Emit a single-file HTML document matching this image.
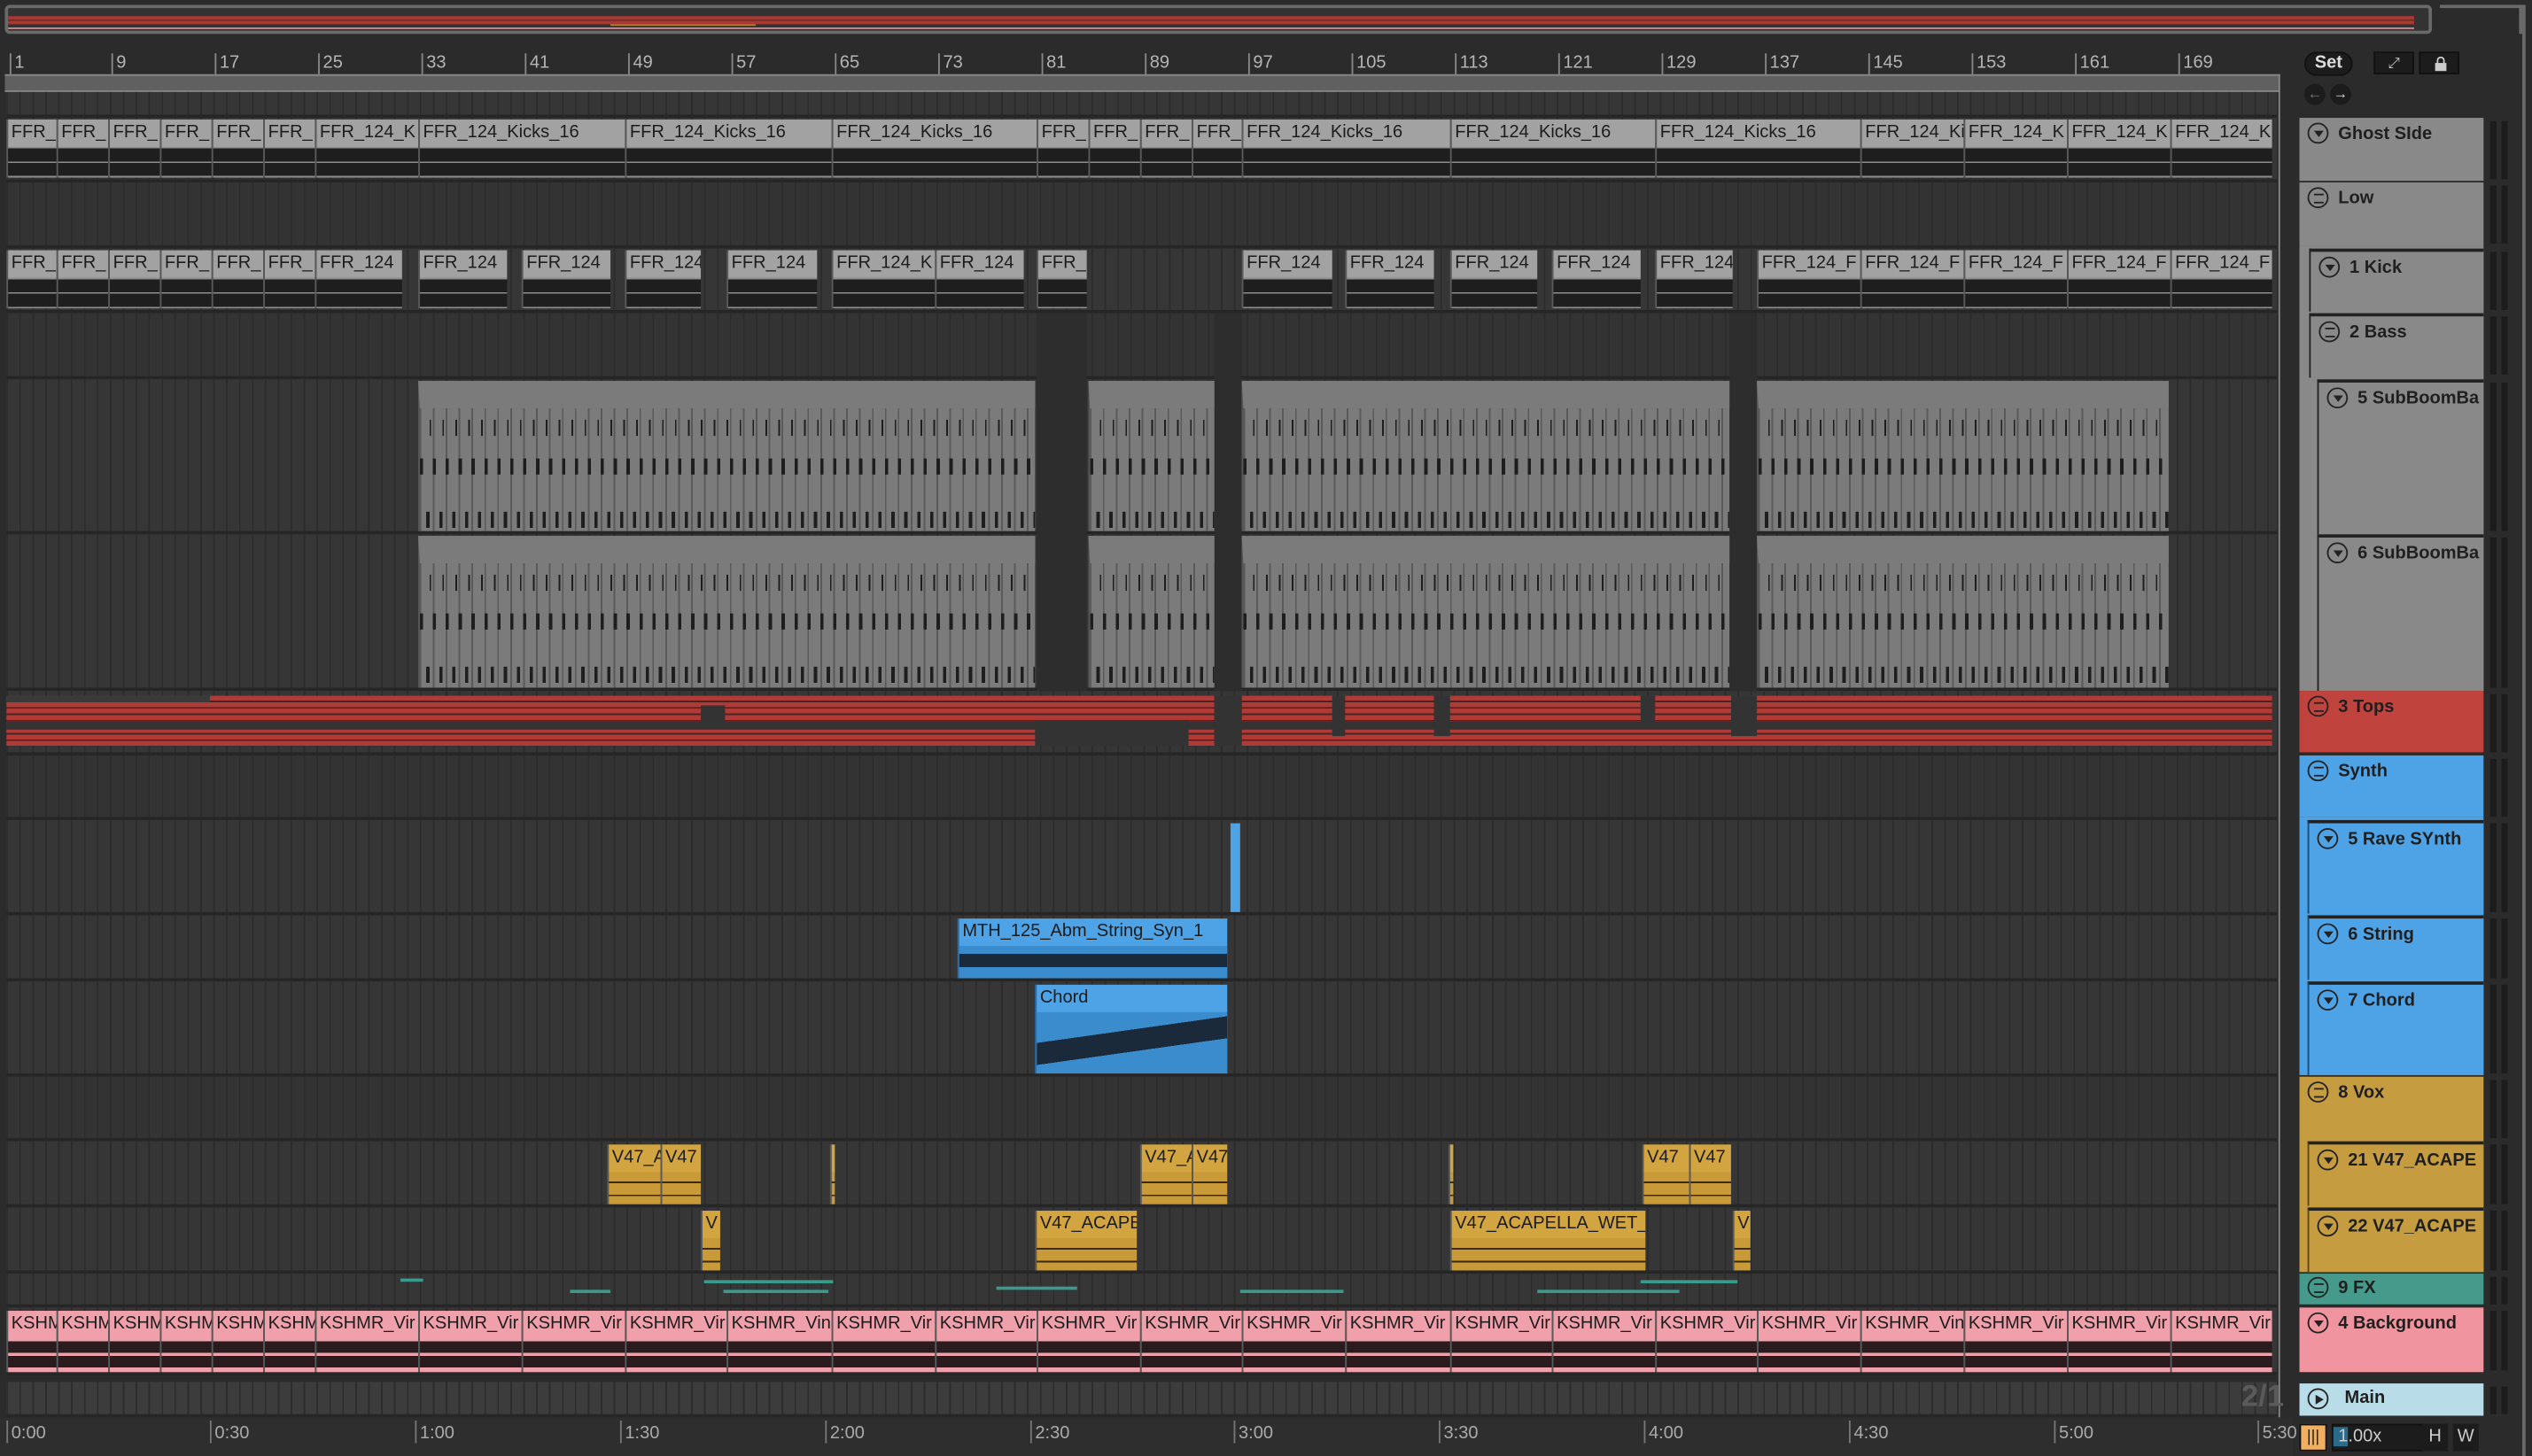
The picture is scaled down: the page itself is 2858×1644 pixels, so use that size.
<!DOCTYPE html>
<html><head><meta charset="utf-8"><style>
*{margin:0;padding:0;box-sizing:border-box}
body{width:2858px;height:1644px;background:#2b2b2b;overflow:hidden;font-family:"Liberation Sans",sans-serif}
#w{position:absolute;left:0;top:0;width:1568px;height:902px;transform:scale(1.8227);transform-origin:0 0;background:#2b2b2b}
.a{position:absolute}
.grid{background-color:#363636;background-image:repeating-linear-gradient(to right,#2c2c2c 0 1px,transparent 1px 8px)}
.row{position:absolute;left:4px;width:1406px;border-bottom:2px solid #262626}
.c{position:absolute;overflow:hidden;border-left:1px solid #5a5a5a;font-size:11px;color:#1c1c1c;white-space:nowrap}
.c .h{height:17px;line-height:17px;padding-left:2px}
.b{display:none}
.g{background:linear-gradient(to bottom,#a2a2a2 0 17px,#8d8d8d 17px 18px,#1e1e1e 18px 26px,#8d8d8d 26px 27px,#1e1e1e 27px 35px,#8d8d8d 35px)}
.p{background:linear-gradient(to bottom,#f0a0aa 0 19px,#2a1c1e 19px 26px,#f0a0aa 26px 28px,#2a1c1e 28px 35px,#f0a0aa 35px)}
.y{background:linear-gradient(to bottom,#d2a540 0 17px,#c89a38 17px 23px,#3a2a10 23px 24px,#c89a38 24px 31px,#3a2a10 31px 32px,#c89a38 32px)}
.bl{background:#4ea3e6}
.m{background:#7b7b7b;border-top:17px solid #7b7b7b;border-left:1px solid #555}
.m .n{position:absolute;left:0;right:0}
.n1{top:7px;height:10px;background:repeating-linear-gradient(to right,transparent 0 6px,#1e1e1e 6px 7px,transparent 7px 8px)}
.n2{top:31px;height:10px;background:repeating-linear-gradient(to right,#1e1e1e 0 2px,transparent 2px 8px,#1e1e1e 8px 10px,transparent 10px 16px)}
.n3{top:64px;height:10px;background:repeating-linear-gradient(to right,transparent 0 4px,#1e1e1e 4px 6px,transparent 6px 12px,#1e1e1e 12px 14px,transparent 14px 16px)}
.m .v{position:absolute;top:-17px;bottom:0;left:0;right:0;background:repeating-linear-gradient(to right,#5a5a5a 0 1px,transparent 1px 8px)}
.hd{position:absolute;left:1424px;width:114px;font-size:11px;font-weight:bold;color:#1f1f1f;padding-left:24px;padding-top:4px;white-space:nowrap;overflow:hidden}
.hd i{position:absolute;left:5px;top:3px;width:13px;height:13px;border:1.3px solid #222;border-radius:50%}
.hd i:after{content:"";position:absolute;left:2.5px;top:4px;border-left:3.5px solid transparent;border-right:3.5px solid transparent;border-top:4px solid #222}
.hd i.l:after{left:3px;top:3px;width:6px;height:4px;border:none;border-top:1px solid #222;border-bottom:1px solid #222}
.hd i.pl:after{left:4px;top:2.5px;border-top:3.5px solid transparent;border-bottom:3.5px solid transparent;border-left:5px solid #222;border-right:none}
.mt{position:absolute;left:1542px;width:12px;background:linear-gradient(to right,#1c1c1c 0 4px,transparent 4px 7px,#1c1c1c 7px 11px,transparent 11px)}
.rn{position:absolute;top:33px;font-size:11px;color:#b5b5b5;border-left:1px solid #888;padding-left:2px;height:14px;line-height:12px}
.tn{position:absolute;top:880px;font-size:11px;color:#aaa;border-left:1px solid #777;padding-left:2px;height:14px;line-height:16px}
</style></head><body><div id="w">
<!-- overview -->
<div class="a" style="left:3px;top:3px;width:1503px;height:18px;border:2px solid #6a6a6a;border-radius:3px;background:#333"></div>
<div class="a" style="left:5px;top:10px;width:1490px;height:5px;background:#a83a34"></div>
<div class="a" style="left:5px;top:12px;width:1490px;height:1px;background:#7a2a26"></div>
<div class="a" style="left:5px;top:17px;width:1490px;height:1px;background:#d88a92"></div>
<div class="a" style="left:378px;top:15px;width:90px;height:1px;background:#b08030"></div>
<div class="a" style="left:1511px;top:3px;width:51px;height:18px;border:2px solid #6a6a6a;border-left:none;border-bottom:none"></div>
<div class="a" style="left:1562px;top:3px;width:2px;height:899px;background:#6a6a6a"></div>
<!-- ruler -->
<div class="rn" style="left:6px">1</div><div class="rn" style="left:69px">9</div><div class="rn" style="left:133px">17</div><div class="rn" style="left:197px">25</div><div class="rn" style="left:261px">33</div><div class="rn" style="left:325px">41</div><div class="rn" style="left:389px">49</div><div class="rn" style="left:453px">57</div><div class="rn" style="left:517px">65</div><div class="rn" style="left:581px">73</div><div class="rn" style="left:645px">81</div><div class="rn" style="left:709px">89</div><div class="rn" style="left:773px">97</div><div class="rn" style="left:837px">105</div><div class="rn" style="left:901px">113</div><div class="rn" style="left:965px">121</div><div class="rn" style="left:1029px">129</div><div class="rn" style="left:1093px">137</div><div class="rn" style="left:1157px">145</div><div class="rn" style="left:1221px">153</div><div class="rn" style="left:1285px">161</div><div class="rn" style="left:1349px">169</div>
<div class="a" style="left:3px;top:46px;width:1409px;height:11px;background:#606060;border-top:1px solid #888;border-bottom:1px solid #888"></div>
<div class="a" style="left:1411px;top:46px;width:1px;height:832px;background:#888"></div>
<!-- rows -->
<div class="row grid" style="top:57px;height:16px"></div>
<div class="row grid" style="top:73px;height:40px"></div>
<div class="row grid" style="top:113px;height:41px;background-color:#333"></div>
<div class="row grid" style="top:154px;height:40px"></div>
<div class="row grid" style="top:194px;height:41px;background-color:#333"></div>
<div class="row grid" style="top:235px;height:96px"></div>
<div class="row grid" style="top:331px;height:97px"></div>
<div class="row grid" style="top:428px;height:40px"></div>
<div class="row grid" style="top:468px;height:40px;background-color:#333"></div>
<div class="row grid" style="top:508px;height:59px"></div>
<div class="row grid" style="top:567px;height:41px"></div>
<div class="row grid" style="top:608px;height:59px"></div>
<div class="row grid" style="top:667px;height:40px;background-color:#333"></div>
<div class="row grid" style="top:707px;height:41px"></div>
<div class="row grid" style="top:748px;height:41px"></div>
<div class="row grid" style="top:789px;height:21px"></div>
<div class="row grid" style="top:810px;height:42px"></div>
<div class="row grid" style="top:856px;height:22px;background-color:#3c3c3c"></div>
<div class="a" style="left:4px;top:852px;width:1406px;height:4px;background:#2a2a2a"></div>
<!-- Ghost side clips -->
<div class="c g" style="left:4px;top:74px;width:31px;height:36px"><div class="h">FFR_</div></div>
<div class="c g" style="left:35px;top:74px;width:32px;height:36px"><div class="h">FFR_</div></div>
<div class="c g" style="left:67px;top:74px;width:32px;height:36px"><div class="h">FFR_</div></div>
<div class="c g" style="left:99px;top:74px;width:32px;height:36px"><div class="h">FFR_</div></div>
<div class="c g" style="left:131px;top:74px;width:32px;height:36px"><div class="h">FFR_</div></div>
<div class="c g" style="left:163px;top:74px;width:32px;height:36px"><div class="h">FFR_</div></div>
<div class="c g" style="left:195px;top:74px;width:64px;height:36px"><div class="h">FFR_124_K</div></div>
<div class="c g" style="left:259px;top:74px;width:128px;height:36px"><div class="h">FFR_124_Kicks_16</div></div>
<div class="c g" style="left:387px;top:74px;width:128px;height:36px"><div class="h">FFR_124_Kicks_16</div></div>
<div class="c g" style="left:515px;top:74px;width:127px;height:36px"><div class="h">FFR_124_Kicks_16</div></div>
<div class="c g" style="left:642px;top:74px;width:32px;height:36px"><div class="h">FFR_</div></div>
<div class="c g" style="left:674px;top:74px;width:32px;height:36px"><div class="h">FFR_</div></div>
<div class="c g" style="left:706px;top:74px;width:32px;height:36px"><div class="h">FFR_</div></div>
<div class="c g" style="left:738px;top:74px;width:31px;height:36px"><div class="h">FFR_</div></div>
<div class="c g" style="left:769px;top:74px;width:129px;height:36px"><div class="h">FFR_124_Kicks_16</div></div>
<div class="c g" style="left:898px;top:74px;width:127px;height:36px"><div class="h">FFR_124_Kicks_16</div></div>
<div class="c g" style="left:1025px;top:74px;width:127px;height:36px"><div class="h">FFR_124_Kicks_16</div></div>
<div class="c g" style="left:1152px;top:74px;width:64px;height:36px"><div class="h">FFR_124_Ki</div></div>
<div class="c g" style="left:1216px;top:74px;width:64px;height:36px"><div class="h">FFR_124_K</div></div>
<div class="c g" style="left:1280px;top:74px;width:64px;height:36px"><div class="h">FFR_124_K</div></div>
<div class="c g" style="left:1344px;top:74px;width:63px;height:36px"><div class="h">FFR_124_K</div></div>
<!-- Kick clips -->
<div class="c g" style="left:4px;top:155px;width:31px;height:36px"><div class="h">FFR_</div></div>
<div class="c g" style="left:35px;top:155px;width:32px;height:36px"><div class="h">FFR_</div></div>
<div class="c g" style="left:67px;top:155px;width:32px;height:36px"><div class="h">FFR_</div></div>
<div class="c g" style="left:99px;top:155px;width:32px;height:36px"><div class="h">FFR_</div></div>
<div class="c g" style="left:131px;top:155px;width:32px;height:36px"><div class="h">FFR_</div></div>
<div class="c g" style="left:163px;top:155px;width:32px;height:36px"><div class="h">FFR_</div></div>
<div class="c g" style="left:195px;top:155px;width:54px;height:36px"><div class="h">FFR_124</div></div>
<div class="c g" style="left:259px;top:155px;width:55px;height:36px"><div class="h">FFR_124</div></div>
<div class="c g" style="left:323px;top:155px;width:55px;height:36px"><div class="h">FFR_124</div></div>
<div class="c g" style="left:387px;top:155px;width:47px;height:36px"><div class="h">FFR_124</div></div>
<div class="c g" style="left:450px;top:155px;width:56px;height:36px"><div class="h">FFR_124</div></div>
<div class="c g" style="left:515px;top:155px;width:64px;height:36px"><div class="h">FFR_124_K</div></div>
<div class="c g" style="left:579px;top:155px;width:55px;height:36px"><div class="h">FFR_124</div></div>
<div class="c g" style="left:642px;top:155px;width:31px;height:36px"><div class="h">FFR_</div></div>
<div class="c g" style="left:769px;top:155px;width:56px;height:36px"><div class="h">FFR_124</div></div>
<div class="c g" style="left:833px;top:155px;width:55px;height:36px"><div class="h">FFR_124</div></div>
<div class="c g" style="left:898px;top:155px;width:54px;height:36px"><div class="h">FFR_124</div></div>
<div class="c g" style="left:961px;top:155px;width:55px;height:36px"><div class="h">FFR_124</div></div>
<div class="c g" style="left:1025px;top:155px;width:48px;height:36px"><div class="h">FFR_124</div></div>
<div class="c g" style="left:1088px;top:155px;width:64px;height:36px"><div class="h">FFR_124_F</div></div>
<div class="c g" style="left:1152px;top:155px;width:64px;height:36px"><div class="h">FFR_124_F</div></div>
<div class="c g" style="left:1216px;top:155px;width:64px;height:36px"><div class="h">FFR_124_F</div></div>
<div class="c g" style="left:1280px;top:155px;width:64px;height:36px"><div class="h">FFR_124_F</div></div>
<div class="c g" style="left:1344px;top:155px;width:63px;height:36px"><div class="h">FFR_124_F</div></div>
<!-- gaps in dark -->
<div class="a" style="left:642px;top:194px;width:31px;height:234px;background:#2d2d2d"></div>
<div class="a" style="left:752px;top:194px;width:17px;height:234px;background:#2d2d2d"></div>
<div class="a" style="left:1071px;top:194px;width:17px;height:234px;background:#2d2d2d"></div>
<!-- SubBoomBa midi -->
<div class="c m" style="left:259px;top:236px;width:382px;height:93px"><div class="v"></div><div class="n n1"></div><div class="n n2"></div><div class="n n3"></div></div>
<div class="c m" style="left:674px;top:236px;width:78px;height:93px"><div class="v"></div><div class="n n1"></div><div class="n n2"></div><div class="n n3"></div></div>
<div class="c m" style="left:769px;top:236px;width:302px;height:93px"><div class="v"></div><div class="n n1"></div><div class="n n2"></div><div class="n n3"></div></div>
<div class="c m" style="left:1088px;top:236px;width:255px;height:93px"><div class="v"></div><div class="n n1"></div><div class="n n2"></div><div class="n n3"></div></div>
<div class="c m" style="left:259px;top:332px;width:382px;height:94px"><div class="v"></div><div class="n n1"></div><div class="n n2"></div><div class="n n3"></div></div>
<div class="c m" style="left:674px;top:332px;width:78px;height:94px"><div class="v"></div><div class="n n1"></div><div class="n n2"></div><div class="n n3"></div></div>
<div class="c m" style="left:769px;top:332px;width:302px;height:94px"><div class="v"></div><div class="n n1"></div><div class="n n2"></div><div class="n n3"></div></div>
<div class="c m" style="left:1088px;top:332px;width:255px;height:94px"><div class="v"></div><div class="n n1"></div><div class="n n2"></div><div class="n n3"></div></div>
<!-- Tops -->
<div class="a" style="left:4px;top:431px;width:748px;height:31px;background:repeating-linear-gradient(to bottom,#b03a36 0 3px,#4a2422 3px 4px)"></div>
<div class="a" style="left:769px;top:431px;width:638px;height:31px;background:repeating-linear-gradient(to bottom,#b03a36 0 3px,#4a2422 3px 4px)"></div>
<div class="a" style="left:4px;top:447px;width:1403px;height:5px;background:#333"></div>
<div class="a" style="left:752px;top:431px;width:17px;height:31px;background:#333"></div>
<div class="a" style="left:4px;top:431px;width:126px;height:4px;background:#3a3a3a"></div>
<div class="a" style="left:434px;top:437px;width:15px;height:12px;background:#333"></div>
<div class="a" style="left:641px;top:446px;width:95px;height:16px;background:#333"></div>
<div class="a" style="left:825px;top:431px;width:8px;height:25px;background:#333"></div>
<div class="a" style="left:888px;top:431px;width:10px;height:25px;background:#333"></div>
<div class="a" style="left:1016px;top:431px;width:9px;height:20px;background:#333"></div>
<div class="a" style="left:1072px;top:431px;width:16px;height:25px;background:#333"></div>
<!-- Synth clips -->
<div class="a bl" style="left:762px;top:510px;width:6px;height:55px"></div>
<div class="c bl" style="left:593px;top:569px;width:167px;height:37px;border-left:1px solid #2a6aa0"><div class="h">MTH_125_Abm_String_Syn_1</div><div style="height:20px;background:linear-gradient(to bottom,#3a8ccc 0 5px,#1a2a3a 5px 13px,#3a8ccc 13px)"></div></div>
<div class="c bl" style="left:641px;top:610px;width:119px;height:55px;border-left:1px solid #2a6aa0"><div class="h">Chord</div><div style="height:38px;background:linear-gradient(172deg,#3a8ccc 0 35%,#1a2a3a 35% 60%,#3a8ccc 60%)"></div></div>
<!-- Vox -->
<div class="c y" style="left:376px;top:709px;width:33px;height:37px"><div class="h">V47_A</div></div>
<div class="c y" style="left:409px;top:709px;width:25px;height:37px"><div class="h">V47</div></div>
<div class="c y" style="left:514px;top:709px;width:3px;height:37px"></div>
<div class="c y" style="left:706px;top:709px;width:32px;height:37px"><div class="h">V47_A</div></div>
<div class="c y" style="left:738px;top:709px;width:22px;height:37px"><div class="h">V47</div></div>
<div class="c y" style="left:897px;top:709px;width:3px;height:37px"></div>
<div class="c y" style="left:1017px;top:709px;width:29px;height:37px"><div class="h">V47</div></div>
<div class="c y" style="left:1046px;top:709px;width:26px;height:37px"><div class="h">V47</div></div>
<div class="c y" style="left:434px;top:750px;width:12px;height:37px"><div class="h">V</div></div>
<div class="c y" style="left:641px;top:750px;width:63px;height:37px"><div class="h">V47_ACAPE</div></div>
<div class="c y" style="left:898px;top:750px;width:121px;height:37px"><div class="h">V47_ACAPELLA_WET_</div></div>
<div class="c y" style="left:1073px;top:750px;width:11px;height:37px"><div class="h">V</div></div>
<!-- FX dashes -->
<div class="a" style="left:248px;top:792px;width:14px;height:2px;background:#3a9a8c"></div>
<div class="a" style="left:353px;top:799px;width:25px;height:2px;background:#3a9a8c"></div>
<div class="a" style="left:436px;top:793px;width:80px;height:2px;background:#3a9a8c"></div>
<div class="a" style="left:448px;top:799px;width:65px;height:2px;background:#3a9a8c"></div>
<div class="a" style="left:617px;top:797px;width:50px;height:2px;background:#3a9a8c"></div>
<div class="a" style="left:768px;top:799px;width:64px;height:2px;background:#3a9a8c"></div>
<div class="a" style="left:952px;top:799px;width:88px;height:2px;background:#3a9a8c"></div>
<div class="a" style="left:1016px;top:793px;width:60px;height:2px;background:#3a9a8c"></div>
<!-- Background pink -->
<div class="c p" style="left:4px;top:812px;width:31px;height:38px"><div class="h">KSHM</div></div>
<div class="c p" style="left:35px;top:812px;width:32px;height:38px"><div class="h">KSHM</div></div>
<div class="c p" style="left:67px;top:812px;width:32px;height:38px"><div class="h">KSHM</div></div>
<div class="c p" style="left:99px;top:812px;width:32px;height:38px"><div class="h">KSHM</div></div>
<div class="c p" style="left:131px;top:812px;width:32px;height:38px"><div class="h">KSHM</div></div>
<div class="c p" style="left:163px;top:812px;width:32px;height:38px"><div class="h">KSHM</div></div>
<div class="c p" style="left:195px;top:812px;width:64px;height:38px"><div class="h">KSHMR_Vir</div></div>
<div class="c p" style="left:259px;top:812px;width:64px;height:38px"><div class="h">KSHMR_Vir</div></div>
<div class="c p" style="left:323px;top:812px;width:64px;height:38px"><div class="h">KSHMR_Vir</div></div>
<div class="c p" style="left:387px;top:812px;width:63px;height:38px"><div class="h">KSHMR_Vir</div></div>
<div class="c p" style="left:450px;top:812px;width:65px;height:38px"><div class="h">KSHMR_Vin</div></div>
<div class="c p" style="left:515px;top:812px;width:64px;height:38px"><div class="h">KSHMR_Vir</div></div>
<div class="c p" style="left:579px;top:812px;width:63px;height:38px"><div class="h">KSHMR_Vir</div></div>
<div class="c p" style="left:642px;top:812px;width:64px;height:38px"><div class="h">KSHMR_Vir</div></div>
<div class="c p" style="left:706px;top:812px;width:63px;height:38px"><div class="h">KSHMR_Vir</div></div>
<div class="c p" style="left:769px;top:812px;width:64px;height:38px"><div class="h">KSHMR_Vir</div></div>
<div class="c p" style="left:833px;top:812px;width:65px;height:38px"><div class="h">KSHMR_Vir</div></div>
<div class="c p" style="left:898px;top:812px;width:63px;height:38px"><div class="h">KSHMR_Vir</div></div>
<div class="c p" style="left:961px;top:812px;width:64px;height:38px"><div class="h">KSHMR_Vir</div></div>
<div class="c p" style="left:1025px;top:812px;width:63px;height:38px"><div class="h">KSHMR_Vir</div></div>
<div class="c p" style="left:1088px;top:812px;width:64px;height:38px"><div class="h">KSHMR_Vir</div></div>
<div class="c p" style="left:1152px;top:812px;width:64px;height:38px"><div class="h">KSHMR_Vin</div></div>
<div class="c p" style="left:1216px;top:812px;width:64px;height:38px"><div class="h">KSHMR_Vir</div></div>
<div class="c p" style="left:1280px;top:812px;width:64px;height:38px"><div class="h">KSHMR_Vir</div></div>
<div class="c p" style="left:1344px;top:812px;width:63px;height:38px"><div class="h">KSHMR_Vir</div></div>
<div class="a" style="left:1388px;top:855px;font-size:19px;font-weight:bold;color:#5a5a5a">2/1</div>
<!-- bottom times -->
<div class="a" style="left:0;top:878px;width:1420px;height:24px;background:#2e2e2e"></div>
<div class="tn" style="left:4px">0:00</div><div class="tn" style="left:130px">0:30</div><div class="tn" style="left:257px">1:00</div><div class="tn" style="left:384px">1:30</div><div class="tn" style="left:511px">2:00</div><div class="tn" style="left:638px">2:30</div><div class="tn" style="left:764px">3:00</div><div class="tn" style="left:891px">3:30</div><div class="tn" style="left:1018px">4:00</div><div class="tn" style="left:1145px">4:30</div><div class="tn" style="left:1272px">5:00</div><div class="tn" style="left:1398px">5:30</div>
<!-- right controls -->
<div class="a" style="left:1427px;top:32px;width:30px;height:15px;border-radius:8px;background:#1c1c1c;border:1px solid #111;color:#ddd;font-size:11px;font-weight:bold;text-align:center;line-height:13px">Set</div>
<div class="a" style="left:1470px;top:32px;width:25px;height:14px;background:#1c1c1c;border:1px solid #111;color:#ccc;font-size:9px;text-align:center;line-height:12px">⤢</div>
<div class="a" style="left:1498px;top:32px;width:25px;height:14px;background:#1c1c1c;border:1px solid #111"><div class="a" style="left:9px;top:6px;width:7px;height:5px;background:#ccc"></div><div class="a" style="left:10px;top:2px;width:5px;height:6px;border:1.5px solid #ccc;border-bottom:none;border-radius:3px 3px 0 0"></div></div>
<div class="a" style="left:1427px;top:52px;width:13px;height:13px;border-radius:50%;background:#1c1c1c;color:#777;font-size:9px;text-align:center;line-height:13px">←</div>
<div class="a" style="left:1443px;top:52px;width:13px;height:13px;border-radius:50%;background:#1c1c1c;color:#ddd;font-size:9px;text-align:center;line-height:13px">→</div>
<!-- headers -->
<div class="hd" style="top:73px;height:39px;background:#898989"><i></i>Ghost SIde</div>
<div class="hd" style="top:113px;height:39px;background:#898989"><i class="l"></i>Low</div>
<div class="a" style="left:1424px;top:152px;width:114px;height:276px;background:#898989"></div>
<div class="hd" style="top:154px;height:39px;left:1430px;width:108px;background:#898989;border-left:1px solid #222;border-top:2px solid #222"><i></i>1 Kick</div>
<div class="hd" style="top:194px;height:40px;left:1430px;width:108px;background:#898989;border-left:1px solid #222;border-top:2px solid #222"><i class="l"></i>2 Bass</div>
<div class="hd" style="top:235px;height:96px;left:1435px;width:103px;background:#898989;border-left:1px solid #222;border-top:2px solid #222"><i></i>5 SubBoomBa</div>
<div class="hd" style="top:331px;height:97px;left:1435px;width:103px;background:#898989;border-left:1px solid #222;border-top:2px solid #222"><i></i>6 SubBoomBa</div>
<div class="hd" style="top:428px;height:38px;background:#c0443d"><i class="l"></i>3 Tops</div>
<div class="hd" style="top:468px;height:38px;background:#4ea3e6"><i class="l"></i>Synth</div>
<div class="a" style="left:1424px;top:506px;width:114px;height:160px;background:#4ea3e6"></div>
<div class="hd" style="top:508px;height:58px;left:1429px;width:109px;background:#4ea3e6;border-left:1px solid #1e4a70;border-top:2px solid #222"><i></i>5 Rave SYnth</div>
<div class="hd" style="top:567px;height:40px;left:1429px;width:109px;background:#4ea3e6;border-left:1px solid #1e4a70;border-top:2px solid #222"><i></i>6 String</div>
<div class="hd" style="top:608px;height:58px;left:1429px;width:109px;background:#4ea3e6;border-left:1px solid #1e4a70;border-top:2px solid #222"><i></i>7 Chord</div>
<div class="hd" style="top:667px;height:38px;background:#c69c40"><i class="l"></i>8 Vox</div>
<div class="a" style="left:1424px;top:705px;width:114px;height:83px;background:#c69c40"></div>
<div class="hd" style="top:707px;height:40px;left:1429px;width:109px;background:#c69c40;border-left:1px solid #5a4418;border-top:2px solid #222"><i></i>21 V47_ACAPE</div>
<div class="hd" style="top:748px;height:40px;left:1429px;width:109px;background:#c69c40;border-left:1px solid #5a4418;border-top:2px solid #222"><i></i>22 V47_ACAPE</div>
<div class="hd" style="top:789px;height:19px;padding-top:3px;background:#459a8c"><i class="l" style="top:2px"></i>9 FX</div>
<div class="hd" style="top:810px;height:40px;background:#f0959f"><i></i>4 Background</div>
<div class="hd" style="top:857px;height:20px;padding-top:3px;padding-left:28px;background:#b8dce8"><i class="pl" style="top:3px"></i>Main</div>
<div class="mt" style="top:75px;height:36px"></div><div class="mt" style="top:115px;height:36px"></div><div class="mt" style="top:156px;height:36px"></div><div class="mt" style="top:196px;height:36px"></div><div class="mt" style="top:237px;height:92px"></div><div class="mt" style="top:333px;height:93px"></div><div class="mt" style="top:430px;height:36px"></div><div class="mt" style="top:470px;height:36px"></div><div class="mt" style="top:510px;height:55px"></div><div class="mt" style="top:569px;height:37px"></div><div class="mt" style="top:610px;height:55px"></div><div class="mt" style="top:669px;height:36px"></div><div class="mt" style="top:709px;height:37px"></div><div class="mt" style="top:750px;height:37px"></div><div class="mt" style="top:791px;height:17px"></div><div class="mt" style="top:812px;height:37px"></div><div class="mt" style="top:859px;height:17px"></div>
<div class="a" style="left:1424px;top:882px;width:17px;height:17px;background:#f0b060;border:1px solid #111;font-size:10px;text-align:center;line-height:15px;color:#222">|||</div>
<div class="a" style="left:1444px;top:882px;width:57px;height:17px;background:#1c1c1c;border:1px solid #111;color:#ccc;font-size:11px;line-height:15px"><span style="background:#2a6a8a;padding-left:3px">1</span>.00x</div>
<div class="a" style="left:1500px;top:882px;width:16px;height:17px;background:#1c1c1c;color:#ccc;font-size:11px;text-align:center;line-height:17px">H</div>
<div class="a" style="left:1519px;top:882px;width:16px;height:17px;background:#1c1c1c;color:#ccc;font-size:11px;text-align:center;line-height:17px">W</div>
</div></body></html>
